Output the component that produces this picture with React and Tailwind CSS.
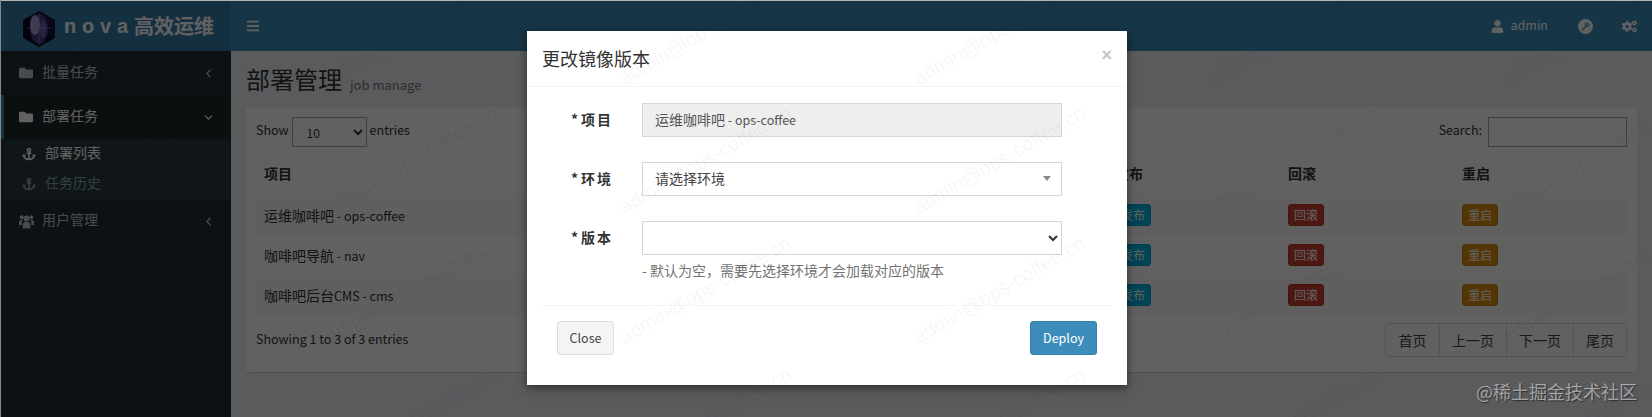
import React from 'react';
import { FaAnchor, FaBars, FaCogs, FaFolder, FaUser } from 'react-icons/fa';
import { ChevronDown, ChevronLeft } from 'lucide-react';

const rows = [
  ['运维咖啡吧', ' - ops-coffee'],
  ['咖啡吧导航', ' - nav'],
  ['咖啡吧后台', 'CMS - cms'],
];

// watermark grid, start point of each text
const markX = [37, 331, 625, 919, 1213, 1507];
const markY = [88, 217, 347, 478];

const Logo = () => (
  <svg width="32" height="36" viewBox="0 0 32 36" className="mr-[9px] mt-[5px] shrink-0">
    <polygon points="16,0 32,9 32,27 16,36 0,27 0,9" fill="#0b0a20" />
    <polygon points="16,0 32,9 32,27 16,18" fill="#17123f" />
    <ellipse cx="16" cy="18" rx="9" ry="15" fill="#463a80" />
    <ellipse cx="12" cy="14" rx="5" ry="10" fill="#a79bd6" />
    <ellipse cx="20" cy="18" rx="3" ry="9" fill="#6d5fae" />
    <path d="M16 2V34M4 17H28" stroke="#9a93d8" strokeWidth="0.6" />
  </svg>
);

const ToolIcon = () => (
  <svg width="15" height="15" viewBox="0 0 15 15" className="ml-[30px] shrink-0">
    <circle cx="7.5" cy="7.5" r="7.5" fill="#fff" />
    <path d="M4 11.5L8 7M6.5 4.5L10 8M8.5 3.5L11.5 6.5" stroke="#3c8dbc" strokeWidth="1.3" fill="none" />
  </svg>
);

const UsersIcon = () => (
  <svg width="15" height="15" viewBox="0 0 15 15" fill="currentColor">
    <circle cx="7.5" cy="4.5" r="3" />
    <path d="M3.7 14.5V11a3.8 3.3 0 0 1 7.6 0v3.5z" />
    <circle cx="2.6" cy="3.2" r="2" />
    <circle cx="12.4" cy="3.2" r="2" />
    <path d="M0 11V8a2.6 2.2 0 0 1 3.8-1.9A5 5 0 0 0 2.8 11z" />
    <path d="M15 11V8a2.6 2.2 0 0 0-3.8-1.9A5 5 0 0 1 12.2 11z" />
  </svg>
);

const SideItem = ({ icon, label, open, active }) => (
  <div className={`flex h-[44px] items-center border-l-[3px] pl-[15px] pr-[16px] ${active ? 'border-[#3c8dbc] bg-[#1e282c] text-white' : 'border-transparent text-[#b8c7ce]'}`}>
    <span className="flex w-[23px] text-[14px]">{icon}</span>
    <span className="flex-1 pb-[3px]">{label}</span>
    {open ? <ChevronDown size={13} strokeWidth={2.5} /> : <ChevronLeft size={13} strokeWidth={2.5} />}
  </div>
);

const SubItem = ({ label, current }) => (
  <div className={`flex h-[30px] items-center pl-[21px] ${current ? 'text-white' : 'text-[#8aa4af]'}`}>
    <FaAnchor className="mr-[9px] text-[14px]" />
    <span className="pb-[3px]">{label}</span>
  </div>
);

const TableBtn = ({ color, label }) => (
  <span className={`inline-block h-[22px] rounded-[3px] border px-[5px] text-[12px] leading-[20px] text-white ${color}`}>{label}</span>
);

const FormRow = ({ label, help, children, className }) => (
  <div className={`flex ${className}`}>
    <label className="flex h-[34px] w-[115px] items-center justify-end pb-[2px] pr-[29px] font-bold text-[#333]">
      <span className="mr-[3px]">*</span>
      <span className="tracking-[2px]">{label}</span>
    </label>
    <div className="w-[420px]">
      {children}
      {help && <p className="mt-[5px] text-[#737373]">{help}</p>}
    </div>
  </div>
);

export default function App() {
  return (
    <div className="relative h-[417px] w-[1652px] overflow-hidden border-l border-[#888] bg-[#ecf0f5] font-['Noto_Sans_CJK_SC',sans-serif] text-[14px] text-[#333]">
      <div className="h-px bg-[#b5b5b5]" />
      {/* Header */}
      <header className="flex h-[50px] bg-[#3c8dbc] text-white">
        <div className="flex w-[230px] items-center bg-[#367fa9] pl-[22px]">
          <Logo />
          <span className="font-['Liberation_Sans',sans-serif] text-[20px] font-bold tracking-[5.8px]">nova</span>
          <span className="text-[20px] font-bold leading-none">高效运维</span>
        </div>
        <div className="flex flex-1 items-center pl-[15px] pr-[15px]">
          <FaBars className="text-[14px]" />
          <div className="ml-auto flex items-center">
            <FaUser className="text-[13px]" />
            <span className="ml-[7px] pb-[2px] text-[12.5px]">admin</span>
            <ToolIcon />
            <FaCogs className="ml-[29px] text-[15px]" />
          </div>
        </div>
      </header>

      <div className="flex h-[366px]">
        {/* Sidebar */}
        <aside className="w-[230px] shrink-0 bg-[#222d32]">
          <SideItem icon={<FaFolder />} label="批量任务" />
          <SideItem icon={<FaFolder />} label="部署任务" open active />
          <div className="bg-[#2c3b41]">
            <SubItem label="部署列表" current />
            <SubItem label="任务历史" />
          </div>
          <SideItem icon={<UsersIcon />} label="用户管理" />
        </aside>

        {/* Content */}
        <main className="flex-1 px-[15px]">
          <div className="flex h-[56px] items-end pb-[11px]">
            <h1 className="text-[24px] leading-[34px]">部署管理</h1>
            <small className="mb-[2px] ml-[8px] text-[13px] text-[#777]">job manage</small>
          </div>
          <section className="h-[266px] rounded-[3px] border-b border-[#d2d6de] bg-white p-[10px]">
            <div className="flex h-[30px] items-center text-[12.5px]">
              <span className="pb-[3px]">Show</span>
              <select defaultValue="10" className="mx-[3px] h-[30px] w-[75px] border border-[#a9a9a9] bg-white pl-[10px] text-[12px]">
                <option>10</option>
              </select>
              <span className="pb-[3px]">entries</span>
              <span className="ml-auto mr-[6px] pb-[3px]">Search:</span>
              <input className="h-[30px] w-[139px] border border-[#a9a9a9] bg-white" />
            </div>
            <table className="mt-[6px] w-full table-fixed">
              <colgroup>
                <col className="w-[851px]" />
                <col className="w-[173px]" />
                <col className="w-[174px]" />
                <col className="w-[173px]" />
              </colgroup>
              <thead>
                <tr className="h-[42px] text-left">
                  <th className="px-[8px] font-bold">项目</th>
                  <th className="px-[8px] font-bold">发布</th>
                  <th className="px-[8px] font-bold">回滚</th>
                  <th className="px-[8px] font-bold">重启</th>
                </tr>
              </thead>
              <tbody>
                {rows.map(([zh, en], i) => (
                  <tr key={zh} className={`h-[40px] border-t border-[#f4f4f4] ${i % 2 === 0 ? 'bg-[#f9f9f9]' : 'bg-white'}`}>
                    <td className="px-[8px]">{zh}<span className="text-[12.5px]">{en}</span></td>
                    <td className="px-[8px]"><TableBtn color="bg-[#00b4e0] border-[#00a0c8]" label="发布" /></td>
                    <td className="px-[8px]"><TableBtn color="bg-[#c9402f] border-[#b83322]" label="回滚" /></td>
                    <td className="px-[8px]"><TableBtn color="bg-[#dd8e10] border-[#cc800a]" label="重启" /></td>
                  </tr>
                ))}
              </tbody>
            </table>
            <div className="mt-[8px] flex">
              <span className="pt-[7px] text-[12.5px]">Showing 1 to 3 of 3 entries</span>
              <div className="ml-auto flex h-[34px] rounded-[4px] border border-[#ddd] text-[#444]">
                <span className="flex w-[53px] items-center justify-center">首页</span>
                <span className="flex w-[67px] items-center justify-center border-l border-[#ddd]">上一页</span>
                <span className="flex w-[67px] items-center justify-center border-l border-[#ddd]">下一页</span>
                <span className="flex w-[53px] items-center justify-center border-l border-[#ddd]">尾页</span>
              </div>
            </div>
          </section>
        </main>
      </div>

      {/* Backdrop */}
      <div className="absolute inset-x-0 bottom-0 top-px bg-black/[0.62]" />

      {/* Modal */}
      <div className="absolute left-[526px] top-[31px] h-[354px] w-[600px] bg-white shadow-[0_3px_9px_rgba(0,0,0,0.5)]">
        <div className="flex h-[56px] items-start justify-between border-b border-[#f4f4f4] px-[15px] pt-[14px]">
          <h4 className="text-[18px] leading-[26px]">更改镜像版本</h4>
          <span className="mt-[-1px] font-['Liberation_Sans',sans-serif] text-[18px] font-bold leading-[22px] text-[#c5c5c5]">×</span>
        </div>
        <div className="pt-[16px]">
          <FormRow label="项目">
            <div className="flex h-[34px] items-center border border-[#d2d6de] bg-[#eee] px-[12px] pb-[2px] text-[#555]">
              <span>运维咖啡吧<span className="text-[12.5px]"> - ops-coffee</span></span>
            </div>
          </FormRow>
          <FormRow label="环境" className="mt-[25px]">
            <div className="flex h-[34px] items-center justify-between border border-[#d2d6de] px-[12px] pb-[2px] text-[#444]">
              请选择环境
              <span className="mr-[-2px] h-0 w-0 border-x-[4px] border-t-[5px] border-x-transparent border-t-[#888]" />
            </div>
          </FormRow>
          <FormRow label="版本" help="- 默认为空，需要先选择环境才会加载对应的版本" className="mt-[25px]">
            <select className="h-[34px] w-full border border-[#d2d6de] bg-white" />
          </FormRow>
        </div>
        <div className="mx-[15px] mt-[24px] flex h-[50px] items-end justify-between border-t border-[#f4f4f4] px-[15px]">
          <button className="h-[34px] w-[57px] rounded-[3px] border border-[#ddd] bg-[#f4f4f4] text-[12.5px] text-[#444]">Close</button>
          <button className="h-[34px] w-[67px] rounded-[3px] border border-[#367fa9] bg-[#3c8dbc] text-[12.5px] text-white">Deploy</button>
        </div>
      </div>

      {/* Watermark over everything */}
      {markX.flatMap((x) => markY.map((y) => (
        <span key={`${x}-${y}`} className="pointer-events-none absolute origin-bottom-left -rotate-[30deg] whitespace-nowrap font-['Liberation_Sans',sans-serif] text-[20px] leading-none text-black/[0.05]" style={{ left: x, top: y - 20 }}>admin@ops-coffee.cn</span>
      )))}

      <span className="absolute bottom-[16px] right-[15px] text-[18px] leading-[20px] text-white/50 [text-shadow:1px_1px_1px_rgba(0,0,0,0.5)]">@稀土掘金技术社区</span>
    </div>
  );
}
